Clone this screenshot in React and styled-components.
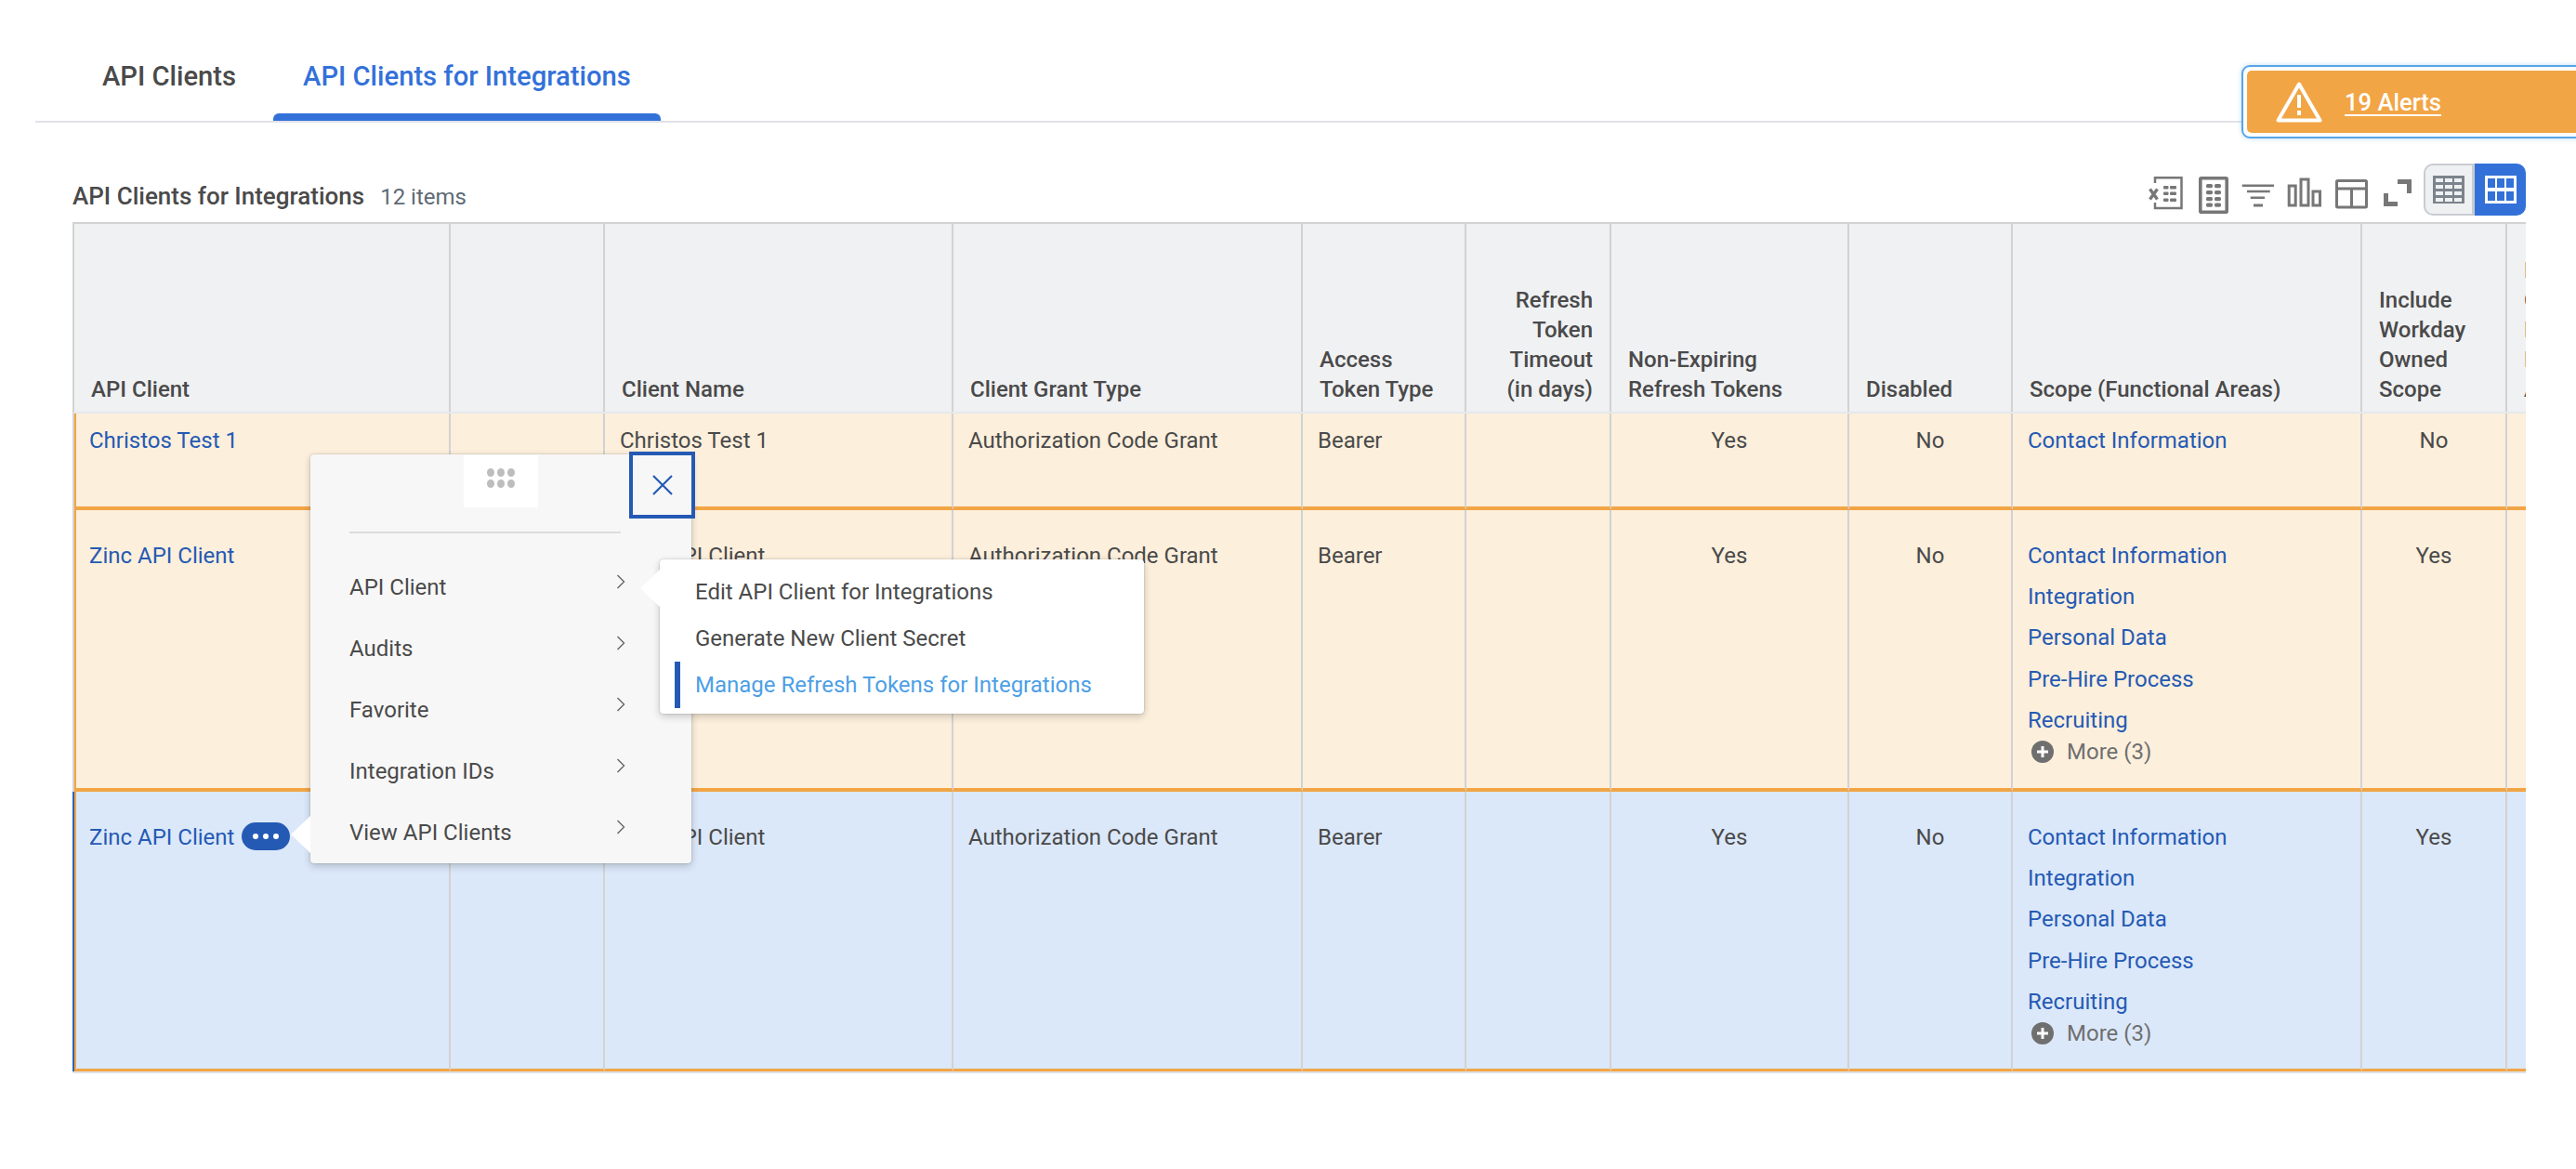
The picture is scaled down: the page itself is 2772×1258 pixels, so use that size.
import React from "react";
import styled, { createGlobalStyle } from "styled-components";

const Global = createGlobalStyle`
  html, body { margin: 0; padding: 0; background: #fff; }
  body { font-family: Roboto, "Liberation Sans", sans-serif; color: #444; }
  * { box-sizing: border-box; }
`;

const COLUMNS = "405px 166px 375px 376px 176px 156px 256px 176px 376px 156px 80px";

const Page = styled.div`
  position: relative;
  width: 2772px;
  height: 1258px;
  overflow: hidden;
`;
const TabBar = styled.div`
  display: flex;
  gap: 8px;
  height: 132px;
  margin-left: 38px;
  padding-left: 40px;
  border-bottom: 2px solid #e1e3e8;
`;
const Tab = styled.div`
  position: relative;
  height: 130px;
  padding: 64px 32px 0;
  font-size: 29.2px;
  line-height: 36px;
  font-weight: 500;
  color: ${(p) => (p.$active ? "#3371d9" : "#4a4a4a")};
  ${(p) =>
    p.$active &&
    `&::after { content: ""; position: absolute; left: 0; right: 0; bottom: 0; height: 8px; background: #3371d9; border-radius: 6px 6px 0 0; }`}
`;
const Section = styled.div`
  padding: 44px 54px 0 78px;
`;
const HeadRow = styled.div`
  display: flex;
  align-items: flex-start;
  justify-content: space-between;
  height: 63px;
`;
const TitleBlock = styled.div`
  display: flex;
  align-items: baseline;
  gap: 17px;
  padding-top: 17px;
`;
const Title = styled.span`
  font-size: 26px;
  line-height: 36px;
  font-weight: 500;
  color: #4a4a4a;
`;
const Count = styled.span`
  font-size: 24px;
  color: #5e6a75;
`;
const Toolbar = styled.div`
  display: flex;
  align-items: flex-start;
`;
const ToolIcon = styled.svg`
  display: block;
  width: 50px;
  height: 56px;
  fill: none;
  stroke: #777;
`;
const ToolDot = styled.rect`
  fill: #777;
  stroke: none;
`;
const Toggle = styled.div`
  display: flex;
  margin-left: 3px;
  width: 110px;
  height: 56px;
`;
const ToggleLeft = styled.div`
  width: 55px;
  display: flex;
  align-items: center;
  justify-content: center;
  background: #eff0f2;
  border: 2px solid #c9ccd1;
  border-right-width: 3px;
  border-radius: 10px 0 0 10px;
`;
const ToggleRight = styled.div`
  width: 55px;
  display: flex;
  align-items: center;
  justify-content: center;
  background: #3371d9;
  border-radius: 0 10px 10px 0;
`;
const GridIcon = styled.svg`
  display: block;
  width: 34px;
  height: 30px;
`;
const TableFrame = styled.div`
  width: 2640px;
  overflow: hidden;
  border-top: 2px solid #d2d2d2;
  border-bottom: 2px solid #dfe1e5;
`;
const HeaderRow = styled.div`
  display: grid;
  grid-template-columns: ${COLUMNS};
  height: 204px;
  background: #f0f1f3;
  border-left: 2px solid #d2d2d2;
  border-bottom: 2px solid #e6e8eb;
`;
const HeaderCell = styled.div`
  display: flex;
  flex-direction: column;
  justify-content: flex-end;
  align-items: ${(p) => (p.$right ? "flex-end" : "flex-start")};
  padding: 0 ${(p) => (p.$right ? "18px" : "0")} 8px 18px;
  border-right: 2px solid #d2d2d2;
  font-size: 24px;
  line-height: 32px;
  font-weight: 500;
  color: #4a4a4a;
  white-space: nowrap;
  overflow: hidden;
`;
const Row = styled.div`
  display: grid;
  grid-template-columns: ${COLUMNS};
  height: ${(p) => p.$height}px;
  background: ${(p) => (p.$selected ? "#dbe8f9" : "#fcefdc")};
  border-left: 2px solid ${(p) => (p.$selected ? "#2a62c4" : "#d2d2d2")};
`;
const Cell = styled.div`
  padding: ${(p) => p.$top}px 16px 0;
  border-right: 2px solid #d2d2d2;
  border-bottom: ${(p) => p.$bottom}px solid #f2a545;
  ${(p) => p.$first && "border-left: 2px solid #f2a545; padding-left: 14px;"}
  text-align: ${(p) => (p.$center ? "center" : "left")};
  font-size: 24px;
  line-height: 32px;
  color: #4a4a4a;
  white-space: nowrap;
  overflow: hidden;
`;
const Link = styled.div`
  color: #255ab4;
`;
const NameWrap = styled.div`
  display: flex;
  align-items: center;
`;
const Pill = styled.div`
  display: flex;
  align-items: center;
  justify-content: center;
  gap: 5px;
  width: 52px;
  height: 30px;
  margin: -2px 0 0 8px;
  border-radius: 15px;
  background: #255ab4;
`;
const PillDot = styled.span`
  width: 6px;
  height: 6px;
  border-radius: 50%;
  background: #fff;
`;
const ScopeList = styled.div`
  display: flex;
  flex-direction: column;
  gap: 12.2px;
`;
const More = styled.div`
  display: flex;
  align-items: center;
  gap: 14px;
  margin-top: 2px;
  padding-left: 4px;
  color: #6f6f6f;
`;
const MoreIcon = styled.svg`
  display: block;
  width: 24px;
  height: 24px;
`;
const AlertBox = styled.div`
  position: absolute;
  left: 2412px;
  top: 70px;
  right: -10px;
  height: 79px;
  padding: 4px;
  background: #fff;
  border: 2px solid #57a5e8;
  border-radius: 9px;
  box-shadow: 0 0 5px rgba(87, 165, 232, 0.4);
`;
const AlertInner = styled.div`
  display: flex;
  align-items: center;
  gap: 24px;
  height: 100%;
  padding-left: 31px;
  background: #f2a545;
  border-radius: 5px;
`;
const AlertIcon = styled.svg`
  display: block;
  width: 50px;
  height: 44px;
`;
const AlertText = styled.span`
  font-size: 25.6px;
  font-weight: 500;
  color: #fff;
  text-decoration: underline;
  text-underline-offset: 4px;
  text-decoration-thickness: 2px;
`;
const Popup = styled.div`
  position: absolute;
  left: 334px;
  top: 489px;
  width: 410px;
  height: 440px;
  background: #f7f7f7;
  border-radius: 4px;
  box-shadow: 0 0 2px rgba(0, 0, 0, 0.25), 0 3px 8px rgba(0, 0, 0, 0.2);
  &::before {
    content: "";
    position: absolute;
    left: -21px;
    top: 389px;
    border-top: 20px solid transparent;
    border-bottom: 20px solid transparent;
    border-right: 21px solid #fff;
  }
`;
const Handle = styled.div`
  display: flex;
  flex-wrap: wrap;
  align-content: center;
  justify-content: center;
  gap: 3px 3px;
  width: 80px;
  height: 56px;
  margin: 1px auto 0;
  padding: 0 24px 8px;
  background: #fff;
`;
const HandleDot = styled.span`
  width: 8px;
  height: 9px;
  border-radius: 50%;
  background: #bdbdbd;
`;
const CloseButton = styled.div`
  position: absolute;
  left: 343px;
  top: -3px;
  width: 71px;
  height: 72px;
  display: flex;
  align-items: center;
  justify-content: center;
  background: #f7f7f7;
  border: 4px solid #255ab4;
`;
const CloseIcon = styled.svg`
  display: block;
  width: 22px;
  height: 22px;
  stroke: #255ab4;
  stroke-width: 2.2;
`;
const Divider = styled.div`
  height: 2px;
  margin: 26px 0 25px 42px;
  width: 292px;
  background: #dcdcdc;
`;
const MenuItem = styled.div`
  display: flex;
  align-items: center;
  justify-content: space-between;
  height: 66px;
  padding: 0 71px 0 42px;
  font-size: 24px;
  color: #4a4a4a;
`;
const Chevron = styled.svg`
  display: block;
  width: 10px;
  height: 16px;
  margin-bottom: 12px;
  fill: none;
  stroke: #666;
  stroke-width: 1.4;
`;
const Submenu = styled.div`
  position: absolute;
  left: 710px;
  top: 602px;
  width: 521px;
  height: 166px;
  padding: 10px 0 0 16px;
  background: #fff;
  border-radius: 4px;
  box-shadow: 0 0 2px rgba(0, 0, 0, 0.25), 0 3px 8px rgba(0, 0, 0, 0.2);
  &::before {
    content: "";
    position: absolute;
    left: -21px;
    top: 11px;
    border-top: 20px solid transparent;
    border-bottom: 20px solid transparent;
    border-right: 21px solid #fff;
  }
`;
const SubItem = styled.div`
  display: flex;
  align-items: center;
  height: 50px;
  padding-left: ${(p) => (p.$active ? "16px" : "22px")};
  font-size: 24px;
  color: ${(p) => (p.$active ? "#4d9fe6" : "#4a4a4a")};
  border-left: ${(p) => (p.$active ? "6px solid #255ab4" : "0")};
`;

const headers = [
  { lines: ["API Client"] },
  { lines: [""] },
  { lines: ["Client Name"] },
  { lines: ["Client Grant Type"] },
  { lines: ["Access", "Token Type"] },
  { lines: ["Refresh", "Token", "Timeout", "(in days)"], right: true },
  { lines: ["Non-Expiring", "Refresh Tokens"] },
  { lines: ["Disabled"] },
  { lines: ["Scope (Functional Areas)"] },
  { lines: ["Include", "Workday", "Owned", "Scope"] },
  { lines: ["Enforce", "Client", "Policy", "Based", "Access"] },
];

const longScope = ["Contact Information", "Integration", "Personal Data", "Pre-Hire Process", "Recruiting"];
const rows = [
  { name: "Christos Test 1", height: 104, top: 13, bottom: 4, owned: "No", scope: ["Contact Information"] },
  { name: "Zinc API Client", height: 303, top: 33, bottom: 4, owned: "Yes", scope: longScope, more: true },
  { name: "Zinc API Client", height: 301, top: 33, bottom: 3, owned: "Yes", scope: longScope, more: true, selected: true },
];

const menu = ["API Client", "Audits", "Favorite", "Integration IDs", "View API Clients"];

function Tools() {
  return (
    <Toolbar>
      <ToolIcon viewBox="0 0 50 56">
        <path d="M14 21V15.2H42.5V48H14V42" strokeWidth="2.5" />
        <path d="M8.5 27.5L16.5 38.5M16.5 27.5L8.5 38.5" strokeWidth="3.4" />
        {[24, 30.5, 37.5].map((y) => (
          <React.Fragment key={y}>
            <ToolDot x="23" y={y} width="5.5" height="3.6" rx="1" />
            <ToolDot x="30" y={y} width="7" height="3.6" rx="1" />
          </React.Fragment>
        ))}
      </ToolIcon>
      <ToolIcon viewBox="0 0 50 56">
        <rect x="12.8" y="15.8" width="28.4" height="36.4" rx="1" strokeWidth="3.6" />
        {[22, 29, 36, 42.5].map((y) => (
          <React.Fragment key={y}>
            <ToolDot x="19" y={y} width="7" height="4.2" rx="1.6" />
            <ToolDot x="28" y={y} width="7" height="4.2" rx="1.6" />
          </React.Fragment>
        ))}
      </ToolIcon>
      <ToolIcon viewBox="0 0 50 56">
        <path d="M7.7 23.7H42M13 30H37.7M16.7 36.7H32" strokeWidth="2.6" />
        <path d="M20 45H30" strokeWidth="3" />
      </ToolIcon>
      <ToolIcon viewBox="0 0 50 56">
        <rect x="8.2" y="24" width="7" height="21" strokeWidth="3" />
        <rect x="21" y="17" width="8" height="28" strokeWidth="3" />
        <rect x="34" y="30" width="7.5" height="15" strokeWidth="3" />
      </ToolIcon>
      <ToolIcon viewBox="0 0 50 56">
        <rect x="9.5" y="18.5" width="32" height="28.5" rx="1" strokeWidth="3" />
        <path d="M9.5 27H41.5M25.5 27V47" strokeWidth="3" />
      </ToolIcon>
      <ToolIcon viewBox="0 0 50 56">
        <path d="M25 19.5H37.5V32M12.5 32V43.5H25" strokeWidth="5" />
      </ToolIcon>
      <Toggle>
        <ToggleLeft>
          <GridIcon viewBox="0 0 34 30">
            <rect width="34" height="30" fill="#7b838c" />
            {[3, 10, 17, 24].map((y) =>
              [3, 13, 23].map((x) => <rect key={`${x}-${y}`} x={x} y={y} width="8" height="4" fill="#eff0f2" />)
            )}
          </GridIcon>
        </ToggleLeft>
        <ToggleRight>
          <GridIcon viewBox="0 0 34 30">
            <rect width="34" height="30" fill="#fff" />
            {[3, 17].map((y) =>
              [3, 13, 23].map((x) => <rect key={`${x}-${y}`} x={x} y={y} width="8" height="10" fill="#3371d9" />)
            )}
          </GridIcon>
        </ToggleRight>
      </Toggle>
    </Toolbar>
  );
}

function Scope({ row }) {
  return (
    <Cell $top={row.top} $bottom={row.bottom}>
      <ScopeList>
        {row.scope.map((s) => (
          <Link key={s}>{s}</Link>
        ))}
      </ScopeList>
      {row.more && (
        <More>
          <MoreIcon viewBox="0 0 24 24">
            <circle cx="12" cy="12" r="12" fill="#6f6f6f" />
            <path d="M12 6v12M6 12h12" stroke="#fff" strokeWidth="3" />
          </MoreIcon>
          More (3)
        </More>
      )}
    </Cell>
  );
}

export default function App() {
  return (
    <Page>
      <Global />
      <TabBar>
        <Tab>API Clients</Tab>
        <Tab $active>API Clients for Integrations</Tab>
      </TabBar>
      <Section>
        <HeadRow>
          <TitleBlock>
            <Title>API Clients for Integrations</Title>
            <Count>12 items</Count>
          </TitleBlock>
          <Tools />
        </HeadRow>
        <TableFrame>
          <HeaderRow>
            {headers.map((h, i) => (
              <HeaderCell key={i} $right={h.right}>
                {h.lines.map((l, j) => (
                  <div key={j}>{l}</div>
                ))}
              </HeaderCell>
            ))}
          </HeaderRow>
          {rows.map((r, i) => (
            <Row key={i} $height={r.height} $selected={r.selected}>
              <Cell $first $top={r.top} $bottom={r.bottom}>
                <NameWrap>
                  <Link>{r.name}</Link>
                  {r.selected && (
                    <Pill>
                      <PillDot />
                      <PillDot />
                      <PillDot />
                    </Pill>
                  )}
                </NameWrap>
              </Cell>
              <Cell $top={r.top} $bottom={r.bottom} />
              <Cell $top={r.top} $bottom={r.bottom}>{r.name}</Cell>
              <Cell $top={r.top} $bottom={r.bottom}>Authorization Code Grant</Cell>
              <Cell $top={r.top} $bottom={r.bottom}>Bearer</Cell>
              <Cell $top={r.top} $bottom={r.bottom} />
              <Cell $center $top={r.top} $bottom={r.bottom}>Yes</Cell>
              <Cell $center $top={r.top} $bottom={r.bottom}>No</Cell>
              <Scope row={r} />
              <Cell $center $top={r.top} $bottom={r.bottom}>{r.owned}</Cell>
              <Cell $top={r.top} $bottom={r.bottom} />
            </Row>
          ))}
        </TableFrame>
      </Section>

      <AlertBox>
        <AlertInner>
          <AlertIcon viewBox="0 0 50 44">
            <path d="M25 2.5L47.5 41.5H2.5Z" fill="none" stroke="#fff" strokeWidth="4" strokeLinejoin="round" />
            <path d="M25 14V28" stroke="#fff" strokeWidth="4" />
            <path d="M25 31V36" stroke="#fff" strokeWidth="4" />
          </AlertIcon>
          <AlertText>19 Alerts</AlertText>
        </AlertInner>
      </AlertBox>

      <Popup>
        <Handle>
          {[0, 1, 2, 3, 4, 5].map((d) => (
            <HandleDot key={d} />
          ))}
        </Handle>
        <CloseButton>
          <CloseIcon viewBox="0 0 22 22">
            <path d="M1 1L21 21M21 1L1 21" />
          </CloseIcon>
        </CloseButton>
        <Divider />
        {menu.map((m) => (
          <MenuItem key={m}>
            {m}
            <Chevron viewBox="0 0 10 16">
              <path d="M1.5 1L8.5 8L1.5 15" />
            </Chevron>
          </MenuItem>
        ))}
      </Popup>

      <Submenu>
        <SubItem>Edit API Client for Integrations</SubItem>
        <SubItem>Generate New Client Secret</SubItem>
        <SubItem $active>Manage Refresh Tokens for Integrations</SubItem>
      </Submenu>
    </Page>
  );
}
